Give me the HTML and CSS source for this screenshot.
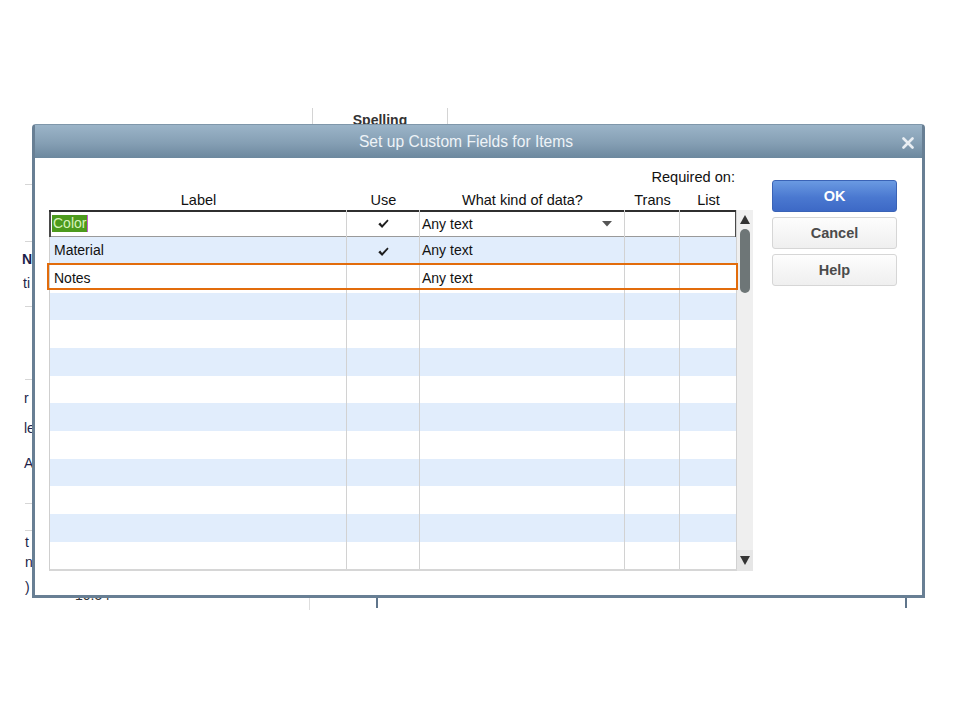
FILE: index.html
```html
<!DOCTYPE html>
<html>
<head>
<meta charset="utf-8">
<link rel="stylesheet" href="styles.css">
</head>
<body>
<div class="desktop">
  <div class="bg-window">
    <div class="bg-spelling">Spelling</div>
    <div class="bg-side">
      <div class="bg-line l1"></div>
      <div class="bg-line l2"></div>
      <div class="bg-text t-n"><b>N</b></div>
      <div class="bg-text t-ti">ti</div>
      <div class="bg-line l3"></div>
      <div class="bg-line l4"></div>
      <div class="bg-text t-r">r</div>
      <div class="bg-text t-le">le</div>
      <div class="bg-text t-a">A</div>
      <div class="bg-line l5"></div>
      <div class="bg-line l6"></div>
      <div class="bg-text t-t">t</div>
      <div class="bg-text t-nn">n</div>
      <div class="bg-text t-p">)</div>
    </div>
    <div class="bg-bottom">
      <span class="bg-num">10.54</span>
      <span class="bg-vline light"></span>
      <span class="bg-vline dark d1"></span>
      <span class="bg-vline dark d2"></span>
    </div>
  </div>

  <div class="dialog">
    <div class="titlebar">
      <span class="title">Set up Custom Fields for Items</span>
      <svg class="close" width="12" height="12" viewBox="0 0 12 12"><path d="M1.5 1.5 L10.5 10.5 M10.5 1.5 L1.5 10.5" stroke="#e9eef3" stroke-width="2.6" stroke-linecap="round"/></svg>
    </div>
    <div class="body">
      <div class="grid-area">
        <div class="required">Required on:</div>
        <div class="cols header">
          <div class="hc">Label</div>
          <div class="hc">Use</div>
          <div class="hc">What kind of data?</div>
          <div class="hc">Trans</div>
          <div class="hc">List</div>
        </div>
        <div class="table-wrap">
          <div class="table">
            <div class="cols row editing">
              <div class="cell"><span class="sel">Color</span></div>
              <div class="cell center"><svg width="11" height="10" viewBox="0 0 11 10"><path d="M0.3 5.2 L2.2 3.6 L4.1 6 L9.4 0.6 L10.6 1.7 L4.1 9 Z" fill="#1e1e1e"/></svg></div>
              <div class="cell combo">Any text<svg class="drop" width="10" height="6" viewBox="0 0 10 6"><path d="M0 0 H10 L5 5.5 Z" fill="#555"/></svg></div>
              <div class="cell"></div>
              <div class="cell"></div>
            </div>
            <div class="cols row alt">
              <div class="cell">Material</div>
              <div class="cell center"><svg width="11" height="10" viewBox="0 0 11 10"><path d="M0.3 5.2 L2.2 3.6 L4.1 6 L9.4 0.6 L10.6 1.7 L4.1 9 Z" fill="#1e1e1e"/></svg></div>
              <div class="cell">Any text</div>
              <div class="cell"></div>
              <div class="cell"></div>
            </div>
            <div class="cols row marked">
              <div class="cell">Notes</div>
              <div class="cell"></div>
              <div class="cell">Any text</div>
              <div class="cell"></div>
              <div class="cell"></div>
            </div>
            <div class="cols row alt"><div class="cell"></div><div class="cell"></div><div class="cell"></div><div class="cell"></div><div class="cell"></div></div>
            <div class="cols row"><div class="cell"></div><div class="cell"></div><div class="cell"></div><div class="cell"></div><div class="cell"></div></div>
            <div class="cols row alt"><div class="cell"></div><div class="cell"></div><div class="cell"></div><div class="cell"></div><div class="cell"></div></div>
            <div class="cols row"><div class="cell"></div><div class="cell"></div><div class="cell"></div><div class="cell"></div><div class="cell"></div></div>
            <div class="cols row alt"><div class="cell"></div><div class="cell"></div><div class="cell"></div><div class="cell"></div><div class="cell"></div></div>
            <div class="cols row"><div class="cell"></div><div class="cell"></div><div class="cell"></div><div class="cell"></div><div class="cell"></div></div>
            <div class="cols row alt"><div class="cell"></div><div class="cell"></div><div class="cell"></div><div class="cell"></div><div class="cell"></div></div>
            <div class="cols row"><div class="cell"></div><div class="cell"></div><div class="cell"></div><div class="cell"></div><div class="cell"></div></div>
            <div class="cols row alt"><div class="cell"></div><div class="cell"></div><div class="cell"></div><div class="cell"></div><div class="cell"></div></div>
            <div class="cols row"><div class="cell"></div><div class="cell"></div><div class="cell"></div><div class="cell"></div><div class="cell"></div></div>
          </div>
          <div class="scrollbar">
            <div class="sb-btn sb-up"><svg width="10" height="9" viewBox="0 0 10 9"><path d="M5 0 L10 9 H0 Z" fill="#333"/></svg></div>
            <div class="sb-thumb"></div>
            <div class="sb-track"></div>
            <div class="sb-btn sb-down"><svg width="10" height="9" viewBox="0 0 10 9"><path d="M0 0 H10 L5 9 Z" fill="#333"/></svg></div>
          </div>
        </div>
      </div>
      <div class="buttons">
        <div class="btn primary">OK</div>
        <div class="btn">Cancel</div>
        <div class="btn">Help</div>
      </div>
    </div>
  </div>
</div>
</body>
</html>
```
FILE: styles.css
```css
html, body {
  margin: 0;
  background: #ffffff;
  font-family: "Liberation Sans", Arial, sans-serif;
}

.desktop {
  position: relative;
  width: 960px;
  height: 720px;
  overflow: hidden;
  background: #ffffff;
}

/* ---------- background window fragments ---------- */
.bg-window {
  position: absolute;
  inset: 0;
}

.bg-spelling {
  position: absolute;
  left: 312px;
  top: 108px;
  width: 134px;
  height: 18px;
  border-left: 1px solid #d4d4d4;
  border-right: 1px solid #d4d4d4;
  text-align: center;
  font-weight: bold;
  font-size: 14px;
  line-height: 24px;
  color: #333333;
}

.bg-side {
  position: absolute;
  left: 23px;
  top: 184px;
  width: 9px;
  display: flex;
  flex-direction: column;
}

.bg-line {
  height: 1px;
  width: 7px;
  margin-left: 2px;
  background: #d6d6d6;
  flex: none;
}

.bg-text {
  height: 16px;
  line-height: 16px;
  font-size: 14px;
  color: #1d1f4a;
  white-space: nowrap;
  flex: none;
}

.l2 { margin-top: 56px; }
.t-n { margin-top: 9px; margin-left: -1px; }
.t-ti { margin-top: 8px; }
.l3 { margin-top: 15px; }
.l4 { margin-top: 72px; }
.t-r { margin-top: 10px; margin-left: 1px; }
.t-le { margin-top: 14px; margin-left: 1px; }
.t-a { margin-top: 19px; margin-left: 1px; }
.l5 { margin-top: 32px; }
.l6 { margin-top: 26px; }
.t-t { margin-top: 3px; margin-left: 2px; }
.t-nn { margin-top: 4px; margin-left: 2px; }
.t-p { margin-top: 9px; margin-left: 2px; }

.bg-bottom {
  position: absolute;
  left: 0;
  top: 586px;
  width: 960px;
  height: 24px;
}

.bg-num {
  position: absolute;
  left: 75px;
  top: 1px;
  font-size: 14px;
  color: #333333;
}

.bg-vline {
  position: absolute;
  top: 0;
  width: 2px;
  height: 22px;
}

.bg-vline.light {
  left: 309px;
  width: 1px;
  height: 24px;
  background: #dedede;
}

.bg-vline.dark { background: #5f758b; }
.bg-vline.d1 { left: 376px; }
.bg-vline.d2 { left: 905px; }

/* ---------- dialog ---------- */
.dialog {
  position: absolute;
  left: 32px;
  top: 124px;
  width: 893px;
  height: 474px;
  box-sizing: border-box;
  border: 3px solid #687f94;
  border-top: 1px solid #7f97aa;
  border-radius: 4px 4px 0 0;
  background: #ffffff;
  display: flex;
  flex-direction: column;
}

.titlebar {
  height: 33px;
  flex: none;
  background: linear-gradient(#9bb4c8 0%, #859fb4 55%, #6c889e 100%);
  display: flex;
  align-items: center;
  justify-content: center;
  padding-right: 25px;
  position: relative;
}

.title {
  color: #eef3f7;
  font-size: 15.6px;
}

.close {
  position: absolute;
  right: 8px;
  top: 12px;
}

.body {
  flex: 1;
  display: flex;
  gap: 19px;
  padding: 0 25px 0 14px;
}

.grid-area {
  width: 704px;
  flex: none;
  display: flex;
  flex-direction: column;
}

.required {
  margin-top: 11px;
  height: 16px;
  line-height: 16px;
  font-size: 14.6px;
  color: #111111;
  text-align: right;
  padding-right: 18px;
}

.cols {
  display: grid;
  grid-template-columns: 297px 73px 205px 55px 57px;
}

.header {
  height: 24.5px;
  box-sizing: border-box;
  padding: 7px 0 0 1px;
  width: 688px;
}

.hc {
  text-align: center;
  font-size: 14.5px;
  line-height: 16px;
  color: #111111;
}

.table-wrap {
  display: flex;
  align-items: stretch;
}

.table {
  width: 688px;
  box-sizing: border-box;
  border-left: 1px solid #cfcfcf;
  border-bottom: 2px solid #d6d6d6;
}

.row {
  height: 27.7px;
  background: #ffffff;
  position: relative;
}

.row.alt { background: #e1edfc; }

.cell {
  border-right: 1px solid #d2d2d2;
  display: flex;
  align-items: center;
  padding: 0 0 2px 2px;
  font-size: 14px;
  color: #111111;
  white-space: nowrap;
  overflow: hidden;
}

.cell:first-child { padding-left: 4px; }

.cell.center {
  justify-content: center;
  padding: 1px 0 0 0;
}

.cell.combo {
  justify-content: space-between;
  padding-right: 12px;
}

.drop { margin-top: 1px; }

.row.editing {
  box-shadow: inset 0 2px 0 #2f2f2f, inset 2px 0 0 #4a4a4a, inset -2px 0 0 #4a4a4a, inset 0 -1px 0 #9a9a9a;
  margin-left: -1px;
  padding-left: 1px;
}

.row.editing .cell { padding-bottom: 0; padding-top: 1px; }
.row.editing .cell:first-child { padding-left: 2px; }

.sel {
  background: #4c9a1d;
  color: #d8f3bd;
  padding: 0 1px;
  line-height: 17px;
  border-right: 1px solid #c45bd0;
}

.row.marked::after {
  content: "";
  position: absolute;
  left: -3.5px;
  right: -1px;
  top: -1.5px;
  bottom: 2.5px;
  border: 2.7px solid #e26c0c;
  pointer-events: none;
}

/* scrollbar */
.scrollbar {
  width: 16px;
  background: #efefef;
  display: flex;
  flex-direction: column;
}

.sb-btn {
  display: flex;
  align-items: center;
  justify-content: center;
  flex: none;
}

.sb-up { height: 18px; padding-top: 1px; box-sizing: border-box; }

.sb-down {
  height: 21px;
  background: #e6e6e6;
}

.sb-thumb {
  height: 64px;
  margin: 1px 3px 0 3px;
  background: #6e7677;
  border-radius: 5px;
  flex: none;
}

.sb-track { flex: 1; }

/* buttons */
.buttons {
  width: 125px;
  flex: none;
  padding-top: 22px;
  display: flex;
  flex-direction: column;
  gap: 5px;
}

.btn {
  height: 32px;
  box-sizing: border-box;
  border: 1px solid #d6d6d6;
  border-radius: 3px;
  background: linear-gradient(#fdfdfd, #efefef);
  color: #4b4b4b;
  font-weight: bold;
  font-size: 14.5px;
  display: flex;
  align-items: center;
  justify-content: center;
}

.btn.primary {
  border-color: #3a63b6;
  background: linear-gradient(#6a9ae2, #4a78d0 55%, #3d69c6);
  color: #ffffff;
}
```
